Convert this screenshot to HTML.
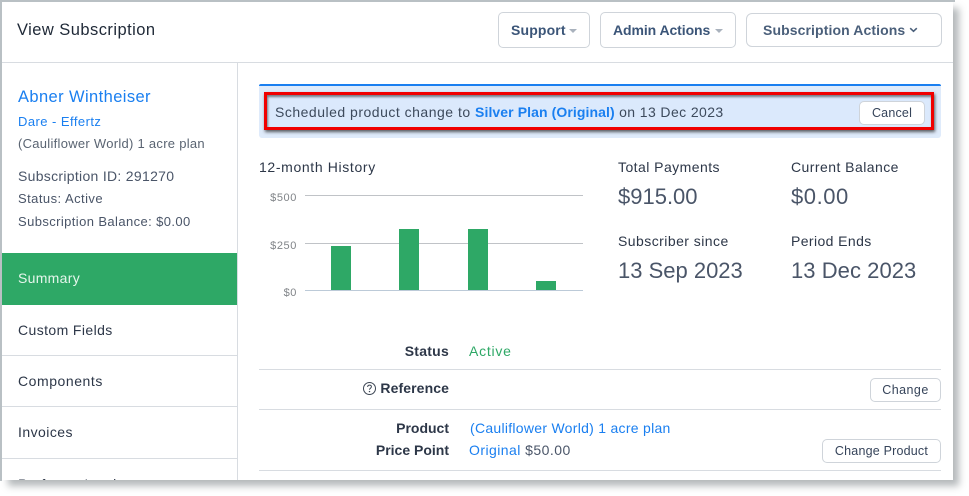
<!DOCTYPE html>
<html><head><meta charset="utf-8"><style>
html,body{margin:0;padding:0;background:#fff}
body{width:969px;height:496px;overflow:hidden;position:relative;font-family:"Liberation Sans",sans-serif}
#c{position:absolute;left:2px;top:2px;width:951px;height:478px;background:#fff;box-shadow:6px 6px 7px rgba(90,100,105,.45)}
#top{position:absolute;left:0;top:0;width:955px;height:2px;background:#b9c0c4}
#left{position:absolute;left:0;top:0;width:2px;height:481px;background:#b9c0c4}
.a{position:absolute;white-space:nowrap}
.l{position:absolute;background:#d8dce1}
.b{position:absolute;box-sizing:border-box;border:1px solid #cfd4da;border-radius:5px;background:#fff;text-align:center;white-space:nowrap}
.t{position:absolute;white-space:nowrap;font-size:14px;font-weight:bold;line-height:18px}
.k{font-size:14px;font-weight:bold;color:#2d3748;line-height:18px;text-align:right;right:520px;letter-spacing:0}
.h{font-size:14px;color:#2d3748;line-height:18px;letter-spacing:.45px}
.v{font-size:22px;color:#4a5568;line-height:28px;letter-spacing:.55px}
.y{font-size:11px;color:#808488;line-height:12px;text-align:right;right:672px;letter-spacing:.6px}
.g{position:absolute;left:305px;width:278px;height:1px;background:#c0c3c7}
.bar{position:absolute;width:20px;background:#2ea866}
.m{font-size:14px;color:#2d3748;line-height:18px;letter-spacing:.55px;left:18px}
</style></head><body>
<div id="c"></div><div id="top"></div><div id="left"></div>

<div class="a" style="left:17px;top:20px;font-size:16.5px;line-height:20px;color:#1f2937;letter-spacing:.45px">View Subscription</div>
<div class="l" style="left:2px;top:62px;width:951px;height:1px"></div>
<div class="l" style="left:237px;top:63px;width:1px;height:417px"></div>

<div class="b" style="left:498px;top:12px;width:92px;height:36px"></div>
<div class="t" style="left:511px;top:21px;color:#3b5578;letter-spacing:.15px">Support</div>
<div class="a" style="left:569px;top:29px;width:0;height:0;border:4px solid transparent;border-top:4px solid #a9b2bd"></div>
<div class="b" style="left:600px;top:12px;width:136px;height:36px"></div>
<div class="t" style="left:613px;top:21px;color:#3b5578;letter-spacing:-.08px">Admin Actions</div>
<div class="a" style="left:715px;top:29px;width:0;height:0;border:4px solid transparent;border-top:4px solid #a9b2bd"></div>
<div class="b" style="left:746px;top:13px;width:196px;height:34px;border-radius:6px"></div>
<div class="t" style="left:763px;top:21px;color:#4a5f7a;letter-spacing:.1px">Subscription Actions</div>
<svg class="a" style="left:909px;top:27px" width="9" height="6" viewBox="0 0 9 6"><path d="M1.2 1.2L4.5 4.3L7.8 1.2" fill="none" stroke="#4a5f7a" stroke-width="1.6"/></svg>

<div class="a" style="left:18px;top:87px;font-size:16.5px;line-height:20px;color:#1a7ff0;letter-spacing:.4px">Abner Wintheiser</div>
<div class="a" style="left:18px;top:114px;font-size:13px;line-height:16px;color:#1a7ff0;letter-spacing:.45px">Dare - Effertz</div>
<div class="a" style="left:18px;top:136px;font-size:13px;line-height:16px;color:#5a6472;letter-spacing:.28px">(Cauliflower World) 1 acre plan</div>
<div class="a" style="left:18px;top:167px;font-size:14px;line-height:18px;color:#4a5568;letter-spacing:.3px">Subscription ID: 291270</div>
<div class="a" style="left:18px;top:190px;font-size:13px;line-height:18px;color:#4a5568;letter-spacing:.45px">Status: Active</div>
<div class="a" style="left:18px;top:213px;font-size:13px;line-height:18px;color:#4a5568;letter-spacing:.4px">Subscription Balance: $0.00</div>

<div class="a" style="left:2px;top:253px;width:235px;height:52px;background:#2ea866"></div>
<div class="a m" style="top:269px;color:#e6f6ec;letter-spacing:.3px">Summary</div>
<div class="a m" style="top:321px;letter-spacing:.4px">Custom Fields</div>
<div class="l" style="left:2px;top:355px;width:235px;height:1px"></div>
<div class="a m" style="top:372px">Components</div>
<div class="l" style="left:2px;top:406px;width:235px;height:1px"></div>
<div class="a m" style="top:423px;letter-spacing:.45px">Invoices</div>
<div class="l" style="left:2px;top:458px;width:235px;height:1px"></div>
<div style="position:absolute;left:2px;top:459px;width:235px;height:21px;overflow:hidden"><div class="a m" style="left:16px;top:16px">Proforma Invoices</div></div>

<div class="a" style="left:259px;top:84px;width:682px;height:54px;background:#dfebfb;border-radius:3px"></div>
<div class="a" style="left:259px;top:84px;width:682px;height:2px;background:#1a7ff0;border-radius:2px 2px 0 0"></div>
<div class="a" style="left:264px;top:92px;width:670px;height:38px;box-sizing:border-box;border:3px solid #f00000;background:#dbe9fc;box-shadow:1px 2px 3px rgba(30,30,30,.7),inset 1px 2px 2px rgba(30,30,30,.55)"></div>
<div class="a" style="left:275px;top:103px;font-size:14px;line-height:18px;color:#3d4a5c;letter-spacing:.5px">Scheduled product change to <b style="color:#1a7ff0;letter-spacing:.09px">Silver Plan (Original)</b> <span style="letter-spacing:.4px">on 13 Dec 2023</span></div>
<div class="b" style="left:859px;top:101px;width:66px;height:24px;font-size:12.5px;line-height:23px;color:#36445a;letter-spacing:.2px">Cancel</div>

<div class="a h" style="left:259px;top:158px;letter-spacing:.64px">12-month History</div>
<div class="a y" style="top:192px">$500</div>
<div class="a y" style="top:240px">$250</div>
<div class="a y" style="top:287px">$0</div>
<div class="g" style="top:195px"></div>
<div class="g" style="top:243px"></div>
<div class="g" style="top:290px;background:#bccad8"></div>
<div class="bar" style="left:331px;top:246px;height:44px"></div>
<div class="bar" style="left:399px;top:229px;height:61px"></div>
<div class="bar" style="left:468px;top:229px;height:61px"></div>
<div class="bar" style="left:536px;top:281px;height:9px"></div>

<div class="a h" style="left:618px;top:158px">Total Payments</div>
<div class="a v" style="left:618px;top:183px;letter-spacing:0">$915.00</div>
<div class="a h" style="left:791px;top:158px">Current Balance</div>
<div class="a v" style="left:791px;top:183px">$0.00</div>
<div class="a h" style="left:618px;top:232px">Subscriber since</div>
<div class="a v" style="left:618px;top:257px;letter-spacing:0">13 Sep 2023</div>
<div class="a h" style="left:791px;top:232px;letter-spacing:.4px">Period Ends</div>
<div class="a v" style="left:791px;top:257px;letter-spacing:.05px">13 Dec 2023</div>

<div class="a k" style="top:342px;letter-spacing:.25px">Status</div>
<div class="a" style="left:469px;top:342px;font-size:14px;line-height:18px;color:#2ea866;letter-spacing:.75px">Active</div>
<div class="l" style="left:259px;top:369px;width:682px;height:1px"></div>
<svg class="a" style="left:362px;top:381px" width="15" height="15" viewBox="0 0 15 15"><circle cx="7.5" cy="7.5" r="6" fill="none" stroke="#3d4654" stroke-width="1"/><path d="M5.6 5.9C5.7 4.7 6.5 4.1 7.5 4.1C8.6 4.1 9.4 4.8 9.4 5.8C9.4 7.2 7.5 7.2 7.5 8.8" fill="none" stroke="#3d4654" stroke-width="1"/><circle cx="7.5" cy="10.6" r=".7" fill="#3d4654"/></svg>
<div class="a k" style="top:379px;letter-spacing:.1px">Reference</div>
<div class="b" style="left:870px;top:378px;width:71px;height:24px;font-size:12.5px;line-height:23px;color:#36445a;letter-spacing:.45px">Change</div>
<div class="l" style="left:259px;top:409px;width:682px;height:1px"></div>
<div class="a k" style="top:419px">Product</div>
<div class="a" style="left:470px;top:419px;font-size:14px;line-height:18px;color:#1a7ff0;letter-spacing:.28px">(Cauliflower World) 1 acre plan</div>
<div class="a k" style="top:441px">Price Point</div>
<div class="a" style="left:469px;top:441px;font-size:14px;line-height:18px;color:#4a5568;letter-spacing:.45px"><span style="color:#1a7ff0">Original</span> $50.00</div>
<div class="b" style="left:822px;top:439px;width:119px;height:24px;font-size:12.5px;line-height:23px;color:#36445a;letter-spacing:.2px">Change Product</div>
<div class="l" style="left:259px;top:470px;width:682px;height:1px"></div>
</body></html>
